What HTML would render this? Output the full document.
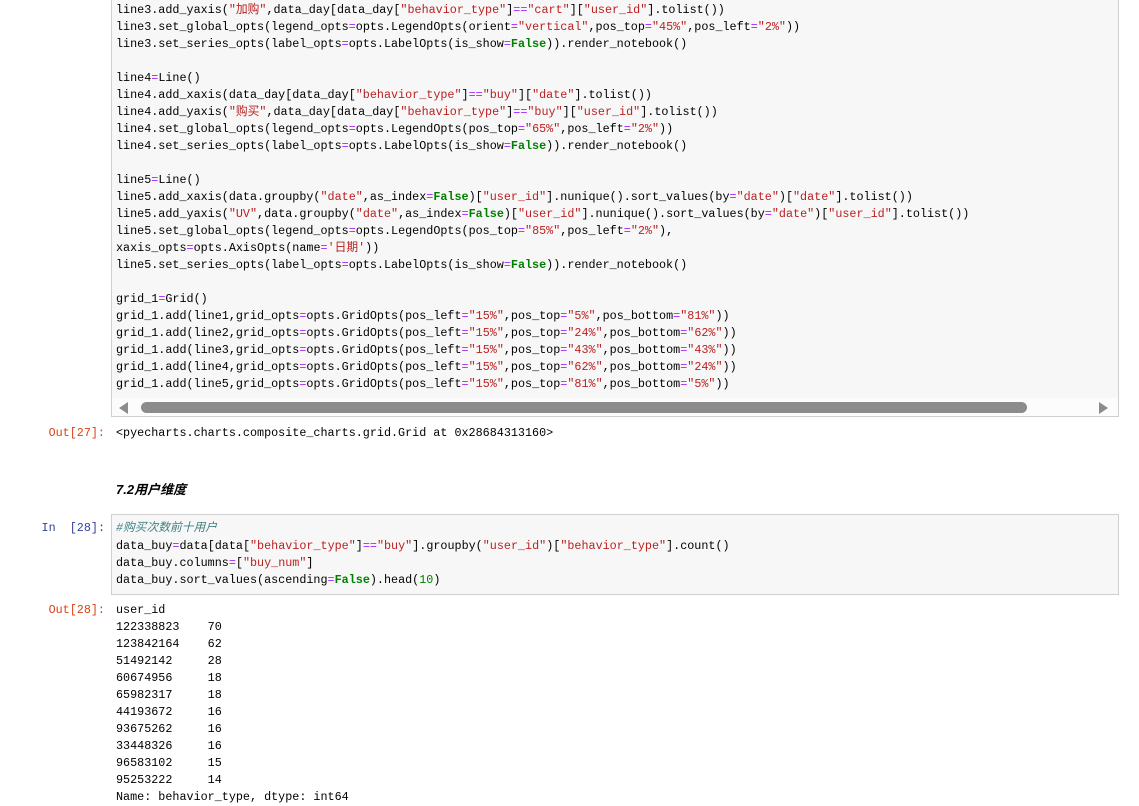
<!DOCTYPE html>
<html><head><meta charset="utf-8"><style>
body{margin:0;width:1139px;height:805px;background:#fff;position:relative;overflow:hidden;font-family:"Liberation Mono","Noto Sans CJK SC",monospace;font-size:11.75px;color:#000}
.box{position:absolute;left:111px;width:1006px;background:#f7f7f7;border:1px solid #cfcfcf}
.l{position:absolute;left:116px;white-space:pre;line-height:17px;height:17px;margin-top:2px}
.s{color:#ba2121}.k{color:#008000;font-weight:bold}.o{color:#aa22ff}.n{color:#008000}.c{color:#408080;font-style:italic}
.p{position:absolute;white-space:pre;line-height:17px;text-align:right;width:100px;left:5px;margin-top:2px}
</style></head><body>
<div class="box" style="top:-2px;height:417px;"></div>
<div style="position:absolute;left:112px;top:398px;width:1006px;height:18px;background:#fcfcfc"></div>
<div style="position:absolute;left:141px;top:402px;width:886px;height:11px;background:#8c8c8c;border-radius:6px"></div>
<div style="position:absolute;left:119px;top:402px;width:0;height:0;border-top:6px solid transparent;border-bottom:6px solid transparent;border-right:9px solid #8c8c8c"></div>
<div style="position:absolute;left:1099px;top:402px;width:0;height:0;border-top:6px solid transparent;border-bottom:6px solid transparent;border-left:9px solid #8c8c8c"></div>

<div class="l" style="top:0">line3.add_yaxis(<span class="s">"加购"</span>,data_day[data_day[<span class="s">"behavior_type"</span>]<span class="o">==</span><span class="s">"cart"</span>][<span class="s">"user_id"</span>].tolist())</div>
<div class="l" style="top:17px">line3.set_global_opts(legend_opts<span class="o">=</span>opts.LegendOpts(orient<span class="o">=</span><span class="s">"vertical"</span>,pos_top<span class="o">=</span><span class="s">"45%"</span>,pos_left<span class="o">=</span><span class="s">"2%"</span>))</div>
<div class="l" style="top:34px">line3.set_series_opts(label_opts<span class="o">=</span>opts.LabelOpts(is_show<span class="o">=</span><span class="k">False</span>)).render_notebook()</div>
<div class="l" style="top:68px">line4<span class="o">=</span>Line()</div>
<div class="l" style="top:85px">line4.add_xaxis(data_day[data_day[<span class="s">"behavior_type"</span>]<span class="o">==</span><span class="s">"buy"</span>][<span class="s">"date"</span>].tolist())</div>
<div class="l" style="top:102px">line4.add_yaxis(<span class="s">"购买"</span>,data_day[data_day[<span class="s">"behavior_type"</span>]<span class="o">==</span><span class="s">"buy"</span>][<span class="s">"user_id"</span>].tolist())</div>
<div class="l" style="top:119px">line4.set_global_opts(legend_opts<span class="o">=</span>opts.LegendOpts(pos_top<span class="o">=</span><span class="s">"65%"</span>,pos_left<span class="o">=</span><span class="s">"2%"</span>))</div>
<div class="l" style="top:136px">line4.set_series_opts(label_opts<span class="o">=</span>opts.LabelOpts(is_show<span class="o">=</span><span class="k">False</span>)).render_notebook()</div>
<div class="l" style="top:170px">line5<span class="o">=</span>Line()</div>
<div class="l" style="top:187px">line5.add_xaxis(data.groupby(<span class="s">"date"</span>,as_index<span class="o">=</span><span class="k">False</span>)[<span class="s">"user_id"</span>].nunique().sort_values(by<span class="o">=</span><span class="s">"date"</span>)[<span class="s">"date"</span>].tolist())</div>
<div class="l" style="top:204px">line5.add_yaxis(<span class="s">"UV"</span>,data.groupby(<span class="s">"date"</span>,as_index<span class="o">=</span><span class="k">False</span>)[<span class="s">"user_id"</span>].nunique().sort_values(by<span class="o">=</span><span class="s">"date"</span>)[<span class="s">"user_id"</span>].tolist())</div>
<div class="l" style="top:221px">line5.set_global_opts(legend_opts<span class="o">=</span>opts.LegendOpts(pos_top<span class="o">=</span><span class="s">"85%"</span>,pos_left<span class="o">=</span><span class="s">"2%"</span>),</div>
<div class="l" style="top:238px">xaxis_opts<span class="o">=</span>opts.AxisOpts(name<span class="o">=</span><span class="s">'日期'</span>))</div>
<div class="l" style="top:255px">line5.set_series_opts(label_opts<span class="o">=</span>opts.LabelOpts(is_show<span class="o">=</span><span class="k">False</span>)).render_notebook()</div>
<div class="l" style="top:289px">grid_1<span class="o">=</span>Grid()</div>
<div class="l" style="top:306px">grid_1.add(line1,grid_opts<span class="o">=</span>opts.GridOpts(pos_left<span class="o">=</span><span class="s">"15%"</span>,pos_top<span class="o">=</span><span class="s">"5%"</span>,pos_bottom<span class="o">=</span><span class="s">"81%"</span>))</div>
<div class="l" style="top:323px">grid_1.add(line2,grid_opts<span class="o">=</span>opts.GridOpts(pos_left<span class="o">=</span><span class="s">"15%"</span>,pos_top<span class="o">=</span><span class="s">"24%"</span>,pos_bottom<span class="o">=</span><span class="s">"62%"</span>))</div>
<div class="l" style="top:340px">grid_1.add(line3,grid_opts<span class="o">=</span>opts.GridOpts(pos_left<span class="o">=</span><span class="s">"15%"</span>,pos_top<span class="o">=</span><span class="s">"43%"</span>,pos_bottom<span class="o">=</span><span class="s">"43%"</span>))</div>
<div class="l" style="top:357px">grid_1.add(line4,grid_opts<span class="o">=</span>opts.GridOpts(pos_left<span class="o">=</span><span class="s">"15%"</span>,pos_top<span class="o">=</span><span class="s">"62%"</span>,pos_bottom<span class="o">=</span><span class="s">"24%"</span>))</div>
<div class="l" style="top:374px">grid_1.add(line5,grid_opts<span class="o">=</span>opts.GridOpts(pos_left<span class="o">=</span><span class="s">"15%"</span>,pos_top<span class="o">=</span><span class="s">"81%"</span>,pos_bottom<span class="o">=</span><span class="s">"5%"</span>))</div>

<div class="p" style="top:423px;color:#d84315">Out[27]:</div>
<div class="l" style="top:423px">&lt;pyecharts.charts.composite_charts.grid.Grid at 0x28684313160&gt;</div>

<div style="position:absolute;left:116px;top:479px;font-family:'Liberation Sans','Noto Sans CJK SC',sans-serif;font-size:13px;font-weight:bold;font-style:italic">7.2用户维度</div>

<div class="box" style="top:514px;height:79px;"></div>
<div class="p" style="top:518px;color:#303f9f">In  [28]:</div>
<div class="l" style="top:518px"><span class="c">#购买次数前十用户</span></div>
<div class="l" style="top:536px">data_buy<span class="o">=</span>data[data[<span class="s">"behavior_type"</span>]<span class="o">==</span><span class="s">"buy"</span>].groupby(<span class="s">"user_id"</span>)[<span class="s">"behavior_type"</span>].count()</div>
<div class="l" style="top:553px">data_buy.columns<span class="o">=</span>[<span class="s">"buy_num"</span>]</div>
<div class="l" style="top:570px">data_buy.sort_values(ascending<span class="o">=</span><span class="k">False</span>).head(<span class="n">10</span>)</div>

<div class="p" style="top:600px;color:#d84315">Out[28]:</div>
<div class="l" style="top:600px">user_id
122338823    70
123842164    62
51492142     28
60674956     18
65982317     18
44193672     16
93675262     16
33448326     16
96583102     15
95253222     14
Name: behavior_type, dtype: int64</div>
</body></html>
